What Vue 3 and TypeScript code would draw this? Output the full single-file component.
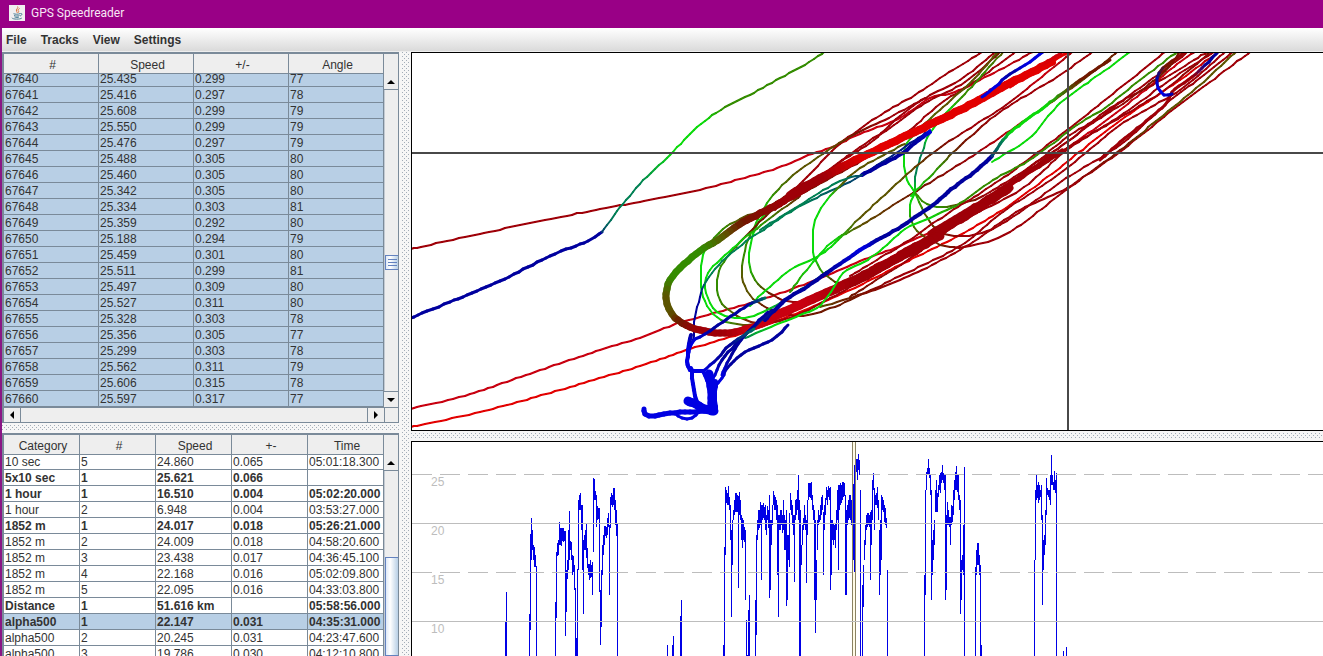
<script setup lang="ts">
import { onMounted, ref } from 'vue'

type Rgb = [number, number, number]
type Knot = [number, number, string?]
interface Track { w: number; pts: Knot[] }
interface Segment { d: string; color: string; w: number }
interface ResultRow { cells: string[]; best?: boolean; selected?: boolean }

const menus = ['File', 'Tracks', 'View', 'Settings']

const pointData: [string, string, string][] = [
  ['25.435', '0.299', '77'], ['25.416', '0.297', '78'], ['25.608', '0.299', '79'],
  ['25.550', '0.299', '79'], ['25.476', '0.297', '79'], ['25.488', '0.305', '80'],
  ['25.460', '0.305', '80'], ['25.342', '0.305', '80'], ['25.334', '0.303', '81'],
  ['25.359', '0.292', '80'], ['25.188', '0.294', '79'], ['25.459', '0.301', '80'],
  ['25.511', '0.299', '81'], ['25.497', '0.309', '80'], ['25.527', '0.311', '80'],
  ['25.328', '0.303', '78'], ['25.356', '0.305', '77'], ['25.299', '0.303', '78'],
  ['25.562', '0.311', '79'], ['25.606', '0.315', '78'], ['25.597', '0.317', '77'],
]
const points = pointData.map((p, i) => [String(67640 + i), ...p])

const results: ResultRow[] = [
  { cells: ['10 sec', '5', '24.860', '0.065', '05:01:18.300'] },
  { cells: ['5x10 sec', '1', '25.621', '0.066', ''], best: true },
  { cells: ['1 hour', '1', '16.510', '0.004', '05:02:20.000'], best: true },
  { cells: ['1 hour', '2', '6.948', '0.004', '03:53:27.000'] },
  { cells: ['1852 m', '1', '24.017', '0.018', '05:26:21.000'], best: true },
  { cells: ['1852 m', '2', '24.009', '0.018', '04:58:20.600'] },
  { cells: ['1852 m', '3', '23.438', '0.017', '04:36:45.100'] },
  { cells: ['1852 m', '4', '22.168', '0.016', '05:02:09.800'] },
  { cells: ['1852 m', '5', '22.095', '0.016', '04:33:03.800'] },
  { cells: ['Distance', '1', '51.616 km', '', '05:58:56.000'], best: true },
  { cells: ['alpha500', '1', '22.147', '0.031', '04:35:31.000'], best: true, selected: true },
  { cells: ['alpha500', '2', '20.245', '0.031', '04:23:47.600'] },
  { cells: ['alpha500', '3', '19.786', '0.030', '04:12:10.800'] },
]

/* Speed palette: slow is blue, medium green, fast red. */
const palette: Record<string, Rgb> = {
  R: [226, 0, 0], r: [200, 0, 16], d: [158, 0, 8], m: [112, 24, 0],
  o: [92, 84, 0], g: [52, 140, 0], G: [10, 218, 10], t: [0, 128, 84],
  b: [0, 0, 158], B: [0, 0, 226], k: [0, 60, 110],
}

const tracks: Track[] = [
  { w: 2, pts: [[411, 249, 'd'], [470, 236], [540, 221], [600, 209], [640, 202], [695, 191], [740, 179, 'r'], [777, 168], [812, 154], [835, 146], [860, 134], [900, 118], [930, 98], [955, 92], [990, 75], [1033, 52, 'd']] },
  { w: 3, pts: [[411, 318, 'b'], [450, 302], [500, 281], [550, 256], [588, 241, 'b'], [602, 232, 'b']] },
  { w: 2, pts: [[602, 232, 'k'], [615, 214, 't'], [640, 184, 't'], [673, 152, 'G'], [690, 134, 'G'], [705, 121, 'G'], [725, 107, 'g'], [750, 95, 'g'], [780, 78, 'g'], [805, 65, 'g'], [824, 52, 'g']] },
  { w: 2, pts: [[411, 409, 'r'], [470, 394], [535, 372], [600, 350], [640, 338], [673, 325], [700, 317], [760, 300], [813, 281], [860, 261], [900, 246], [950, 222], [1000, 192], [1067, 148], [1120, 110], [1180, 62], [1195, 52, 'd']] },
  { w: 2, pts: [[411, 427, 'R'], [480, 412], [560, 390], [640, 366], [690, 349], [740, 334], [800, 312], [850, 290], [900, 265], [960, 235], [1010, 205], [1067, 162], [1110, 128], [1180, 80], [1218, 52, 'd']] },
  { w: 2, pts: [[982, 52, 'd'], [945, 75], [915, 95], [885, 112], [860, 129], [835, 148], [800, 184], [772, 205, 'm'], [740, 219, 'o'], [723, 229, 'g'], [708, 245, 'g']] },
  { w: 2, pts: [[995, 52, 'd'], [960, 80], [930, 95], [900, 116], [870, 143], [838, 163], [810, 185], [775, 210, 'd']] },
  { w: 2, pts: [[1000, 52, 'm'], [965, 82, 'd'], [925, 103], [890, 128], [860, 147], [820, 178, 'd']] },
  { w: 2, pts: [[1015, 52, 'd'], [980, 78], [940, 104], [910, 130], [880, 150], [850, 160, 'd']] },
  { w: 2, pts: [[1003, 52, 'o'], [985, 72, 'g'], [962, 97, 'g'], [946, 113, 'G'], [930, 133, 'G'], [922, 153, 't'], [915, 177, 't'], [915, 193, 'G'], [910, 205, 'G'], [912, 222, 'g'], [922, 235, 'o'], [945, 246, 'm'], [970, 246, 'd'], [1010, 232, 'd'], [1070, 187], [1120, 152], [1160, 120], [1210, 82], [1250, 52, 'd']] },
  { w: 2, pts: [[998, 52, 'o'], [975, 78, 'o'], [940, 110, 'o'], [918, 130, 'g'], [905, 147, 'G'], [904, 162, 'G'], [907, 180, 'G'], [915, 193, 'G'], [927, 217, 'o'], [940, 232, 'm'], [965, 236, 'd'], [1000, 225, 'd'], [1070, 176], [1120, 145], [1165, 105], [1200, 78], [1233, 52, 'd']] },
  { w: 2, pts: [[925, 98, 'd'], [885, 120, 'd'], [855, 134, 'm'], [827, 151, 'o'], [797, 172, 'o'], [773, 195, 'g'], [760, 215, 'G'], [748, 240, 'g'], [743, 260, 'g'], [742, 277, 'o'], [750, 295, 'o'], [767, 308, 'm'], [790, 315, 'd'], [813, 314, 'm'], [850, 300, 'm'], [900, 276, 'd'], [960, 246], [1000, 214], [1067, 168], [1120, 125], [1180, 90], [1225, 52, 'd']] },
  { w: 2, pts: [[870, 156, 'd'], [800, 195, 'm'], [768, 212, 'G'], [755, 230, 'G'], [749, 257, 'G'], [755, 280, 'g'], [773, 295, 'm'], [793, 302, 'd'], [820, 298, 'd'], [870, 275, 'd'], [940, 235, 'd'], [1067, 142], [1110, 108], [1165, 78], [1207, 52, 'd']] },
  { w: 2, pts: [[840, 170, 'd'], [780, 205, 'm'], [750, 232, 'm'], [727, 257, 'g'], [717, 280, 'g'], [720, 300, 'g'], [737, 316, 'o'], [763, 323, 'd'], [800, 314, 'd'], [850, 287, 'd']] },
  { w: 2, pts: [[800, 196, 'm'], [765, 222, 'g'], [733, 248, 'G'], [708, 273, 'G'], [706, 293, 'G'], [717, 312, 'G'], [740, 318, 'G'], [763, 312, 'G'], [790, 297, 't'], [830, 270, 't'], [858, 252, 'k']] },
  { w: 2, pts: [[730, 230, 'o'], [705, 250, 'G'], [701, 277, 'G'], [703, 297, 'G'], [717, 317, 'G'], [743, 325, 'o'], [780, 320, 'd']] },
  { w: 2, pts: [[930, 130, 'b'], [860, 176, 'k'], [800, 206, 't'], [760, 232, 't'], [730, 254, 't'], [707, 280, 't'], [700, 297, 'b'], [695, 317, 'b'], [693, 340, 'b'], [688, 356, 'B'], [689, 368, 'B']] },
  { w: 2, pts: [[750, 306, 'G'], [763, 293, 'G'], [790, 270, 'G'], [817, 257, 'G'], [835, 243, 'G'], [860, 218, 'o'], [903, 178, 'o'], [937, 150, 'm'], [967, 130, 'd'], [1010, 102, 'd'], [1045, 74, 'r'], [1072, 52, 'd']] },
  { w: 2, pts: [[790, 292, 'g'], [813, 262, 'G'], [835, 240, 'G'], [860, 226, 'o'], [913, 193, 'm'], [977, 153, 'd'], [1030, 117, 'r'], [1080, 82, 'o'], [1117, 52, 'm']] },
  { w: 2, pts: [[905, 144, 'o'], [860, 168, 'o'], [843, 183, 'o'], [827, 200, 'G'], [815, 220, 'G'], [813, 240, 'G'], [814, 257, 'G'], [823, 273, 'g'], [840, 283, 'm'], [865, 280, 'd']] },
  { w: 2, pts: [[915, 193, 'g'], [927, 204, 'g'], [943, 207, 'g'], [970, 201, 'm'], [990, 192, 'd'], [1040, 160], [1070, 140], [1130, 95], [1175, 62], [1187, 52, 'd']] },
  { w: 2, pts: [[911, 196, 'G'], [940, 166, 'g'], [960, 146, 'm'], [1000, 112, 'd'], [1060, 75], [1092, 52, 'd']] },
  { w: 2, pts: [[992, 162, 'G'], [1027, 140, 'G'], [1045, 120, 'G'], [1060, 103, 'G'], [1080, 88, 'G'], [1100, 74, 'G'], [1130, 52, 'G']] },
  { w: 2, pts: [[1165, 52, 'd'], [1140, 72], [1105, 100], [1070, 128], [1000, 180], [950, 212], [900, 246], [850, 276, 'd']] },
  { w: 2, pts: [[1180, 52, 'm'], [1160, 76, 'm'], [1110, 112, 'd'], [1070, 135], [1020, 175], [940, 230], [870, 268, 'r']] },
  { w: 2, pts: [[1210, 52, 'm'], [1170, 86, 'd'], [1130, 112], [1070, 146], [1010, 184], [950, 225], [880, 272], [850, 287, 'd']] },
  { w: 2, pts: [[1214, 52, 'd'], [1170, 80], [1120, 116], [1067, 150], [1020, 190], [960, 222], [905, 262], [850, 297, 'm']] },
  { w: 2, pts: [[1236, 52, 'o'], [1200, 85, 'o'], [1160, 118, 'o'], [1120, 150, 'm'], [1067, 188, 'd'], [1020, 210], [960, 250], [900, 280], [850, 298, 'm'], [820, 307, 'o']] },
  { w: 3, pts: [[1218, 52, 'b'], [1205, 65, 'b'], [1192, 77, 'd'], [1172, 92, 'd'], [1165, 105, 'd'], [1125, 138, 'd'], [1100, 160, 'd']] },
  { w: 3, pts: [[1185, 52, 'd'], [1163, 68, 'm'], [1157, 78, 'b'], [1158, 88, 'B'], [1164, 95, 'B'], [1172, 94, 'b']] },
  { w: 5, pts: [[1062, 151, 'd'], [1010, 184], [970, 209], [930, 233, 'd']] },
  { w: 7, pts: [[1010, 188, 'd'], [970, 214], [930, 238], [900, 254, 'd']] },
  { w: 9, pts: [[940, 236, 'd'], [900, 257], [850, 282], [800, 305, 'r'], [765, 321, 'r']] },
  { w: 2, pts: [[745, 338, 't'], [775, 325, 'G'], [800, 315, 'G'], [817, 308, 'G'], [828, 296, 'G'], [843, 273, 'G'], [860, 264, 'G'], [880, 251, 'G'], [905, 229, 'G'], [930, 218, 'G'], [960, 203, 'g'], [993, 180, 'g'], [1033, 158, 'g'], [1077, 125, 'g'], [1105, 108, 'g'], [1140, 80, 'g'], [1177, 52, 'g']] },
  { w: 7, pts: [[830, 174, 'd'], [780, 203, 'd'], [740, 224, 'm'], [722, 237, 'o'], [700, 251, 'g'], [684, 264, 'g'], [670, 280, 'g'], [666, 298, 'o'], [672, 314, 'o'], [682, 323, 'm'], [700, 330, 'd'], [725, 333, 'd'], [750, 328, 'r'], [770, 321, 'r']] },
  { w: 8, pts: [[1052, 62, 'R'], [1010, 83], [960, 110], [910, 134], [860, 158, 'R'], [820, 178, 'd'], [790, 195, 'd']] },
  { w: 3, pts: [[1068, 52, 'R'], [1040, 68, 'R'], [1010, 87, 'R']] },
  { w: 3, pts: [[1062, 52, 'r'], [1030, 72, 'R'], [990, 90, 'R']] },
  { w: 3, pts: [[1043, 52, 'B'], [1025, 65, 'B'], [1010, 74, 'b'], [995, 87, 'B'], [982, 97, 'B']] },
  { w: 4, pts: [[930, 132, 'B'], [915, 143, 'b'], [903, 153, 'b'], [885, 163, 'b'], [862, 175, 'b']] },
  { w: 2, pts: [[862, 175, 'k'], [840, 181, 't'], [800, 205, 't'], [760, 230, 't']] },
  { w: 4, pts: [[992, 156, 'b'], [977, 170], [958, 184], [940, 199], [907, 223], [877, 240], [860, 250, 'B'], [827, 273, 'b'], [800, 291], [785, 300, 'b'], [765, 320, 'b']] },
  { w: 3, pts: [[992, 156, 'k'], [1003, 140, 't'], [1012, 131, 'G'], [1030, 117, 'G'], [1047, 105, 'G'], [1080, 80, 'm'], [1110, 60, 'm']] },
  { w: 3, pts: [[773, 310, 'b'], [750, 330, 'k'], [735, 345, 'b'], [722, 360, 'b'], [713, 378, 'B']] },
  { w: 3, pts: [[788, 325, 'b'], [772, 340, 'b'], [745, 352, 'b'], [728, 367, 'b'], [722, 378, 'B'], [714, 386, 'B']] },
  { w: 3, pts: [[768, 312, 'b'], [745, 335, 'b'], [730, 358, 'b'], [722, 375, 'B']] },
  { w: 3, pts: [[754, 329, 't'], [730, 345, 'b'], [718, 358, 'b'], [703, 371, 'B']] },
  { w: 3, pts: [[765, 298, 't'], [748, 305, 'b'], [735, 314, 'b'], [710, 331, 'b'], [692, 343, 'B'], [687, 365, 'B']] },
  { w: 4, pts: [[691, 335, 'b'], [688, 350, 'B'], [688, 366], [694, 371], [703, 371], [707, 380], [712, 390, 'B']] },
  { w: 4, pts: [[691, 368, 'B'], [693, 384], [695, 396], [698, 406, 'B']] },
  { w: 9, pts: [[709, 374, 'B'], [711, 386], [712, 398], [712, 411, 'B']] },
  { w: 6, pts: [[715, 382, 'B'], [714, 396], [715, 411, 'B']] },
  { w: 9, pts: [[688, 401, 'B'], [694, 403], [704, 409], [714, 411, 'B']] },
  { w: 5, pts: [[644, 409, 'B'], [645, 414], [655, 416], [670, 413], [690, 412], [712, 411, 'B']] },
  { w: 3, pts: [[676, 414, 'B'], [682, 418], [692, 418], [699, 411, 'B']] },
]

function expand(track: Track): Segment[] {
  const p = track.pts
  let last: Rgb = palette[p[0][2] ?? 'd']
  const colors = p.map(k => (last = k[2] ? palette[k[2]] : last))
  const out: Segment[] = []
  for (let i = 0; i < p.length - 1; i++) {
    const a = p[Math.max(0, i - 1)], b = p[i], c = p[i + 1], e = p[Math.min(p.length - 1, i + 2)]
    const at = (t: number, axis: 0 | 1) => {
      const v = [a[axis], b[axis], c[axis], e[axis]]
      return 0.5 * (2 * v[1] + (v[2] - v[0]) * t + (2 * v[0] - 5 * v[1] + 4 * v[2] - v[3]) * t * t
        + (3 * v[1] - v[0] - 3 * v[2] + v[3]) * t * t * t)
    }
    const steps = Math.max(2, Math.round(Math.hypot(c[0] - b[0], c[1] - b[1]) / 5))
    for (let s = 0; s < steps; s++) {
      const t0 = s / steps, t1 = (s + 1) / steps
      const rgb = colors[i].map((v, n) => Math.round(v + (colors[i + 1][n] - v) * (t0 + t1) / 2))
      out.push({
        d: `M${Math.round(at(t0, 0))} ${Math.round(at(t0, 1))}L${Math.round(at(t1, 0))} ${Math.round(at(t1, 1))}`,
        color: `rgb(${rgb.join(',')})`,
        w: track.w,
      })
    }
  }
  return out
}
const segments = tracks.flatMap(expand)

/* Runs of consecutive samples: first column, then high,low per column. */
const runs: [number, string][] = [
  [506, '592,656'], [505, '622,656'],
  [529, '614,656 534,630 518,560 530,550 545,560 547,567 555,567 566,656'],
  [555, '602,656 552,618 543,556 540,555 522,545 528,545 528,546 528,541 528,542 531,541 531,636 570,612 560,579 530,570 511,560 541,550 542,560 555,575 556,572 565,590 588,656 638,656 569,656 500,570 495,510 493,510 505,530 505,570 540,614 535,550 530,550 524,558 548,568 564,575 564,580 560,578 565,577 562,595 478,552 479,500 491,500 495,527 506,520 508,519 508,592 590,645 570,627 545,575 535,555 526,545 526,536 527,538 518,535 513,527 525,595 497,528 493,505 495,507 488,505 488,510 500,525 510,536 523,656'],
  [667, '645,656'], [672, '645,656 636,656'], [680, '616,656 600,656'],
  [723, '645,656 547,656 487,555 490,503 493,505 486,505 497,510 505,540 530,617 520,565 510,520 500,515 493,512 493,512 495,512 496,588 492,515 500,520 515,540 518,548 520,540 527,542 530,600 620,656'],
  [747, '655,656 610,656 595,656'],
  [755, '600,656 535,635 520,540 510,530 510,528 502,525 505,580 505,520 503,518 507,520 505,530 515,535 506,520 510,528 495,598 520,590 520,545 505,525 491,505 495,510 497,510 500,520 505,575 515,617 515,530 510,530 510,525 515,533 500,530 515,550 520,550 510,606 535,600 535,560 513,567 493,510 500,515 505,525 515,535 515,582 500,520 499,515 490,510 475,520 500,656 510,656 545,565 525,545 518,530 505,525 515,530 520,583 500,535 483,500 483,497 483,498 482,500 495,510 505,520 510,600 520,633 560,600 520,550 510,525 515,522 505,520 497,515 495,510 512,575 505,530 498,515 487,500 490,505 486,497 488,500 487,590 520,575 520,540 523,545 525,540 523,548 510,530 490,520 485,570 485,510 483,505 485,503 482,500 482,497 483,496 495,595 510,595 505,525 500,520 495,518 495,520 500,525 512,520 484,560 465,572 465,570 459,472 459,480 454,470 460,475 490,656'],
  [861, '656,656 585,656 565,607 540,560 525,545 515,530 513,527 513,525 515,527 512,580 510,545 480,520 473,490 488,530 495,505 493,505 487,508 500,520 530,595 520,575 495,560 497,510 500,512 505,522 508,525 518,528 570,656'],
  [924, '575,656 490,595 472,490 468,475 459,475 468,478 475,495 490,600 540,575 530,560 520,545 490,512 480,512 493,512 485,497 475,490 473,493 472,483 465,480 473,483 474,490 475,600 515,590 502,525 510,525 517,527 517,545 505,525 506,522 490,515 480,500 472,490 466,490 475,492 475,500 495,510 500,614 560,600 555,570 525,575 467,656'],
  [975, '567,656 550,575 543,565 543,565 555,575 565,656 645,656'],
  [1034, '560,656 490,560 475,500 485,498 482,503 485,500 490,497 485,520 515,605 540,570 535,555 510,545 478,515 488,495 490,497 490,500 475,505 455,485 475,485 482,490 471,490 480,493 473,656'],
  [1063, '651,656'], [1066, '647,656'],
]
const speedPath = runs
  .map(([x0, text]) => text.split(' ').map((pair, i) => {
    const [hi, lo] = pair.split(',')
    return `M${x0 + i + 0.5} ${hi}V${lo}`
  }).join(''))
  .join('')

const gridLines = [
  { y: 474, label: '25', dashed: true },
  { y: 523, label: '20', dashed: false },
  { y: 572, label: '15', dashed: true },
  { y: 621, label: '10', dashed: false },
]

const pointsView = ref<HTMLElement | null>(null)
const resultsView = ref<HTMLElement | null>(null)
onMounted(() => {
  if (pointsView.value) pointsView.value.scrollTop = 3
  if (resultsView.value) resultsView.value.scrollTop = 1
})
</script>

<template>
  <div class="window">
    <header class="titlebar">
      <svg class="logo" viewBox="0 0 16 16" aria-hidden="true">
        <rect width="16" height="16" fill="#f1eef0" />
        <path d="M8.6 1.5C10 3.2 6.2 4.300 7.600 6.300C8 7 8.400 7.300 8.200 8M10.600 3.500C8.600 4.500 8.800 5.200 9.500 6.200C9.900 6.900 9.500 7.400 9 7.800" fill="none" stroke="#d9743f" stroke-width="1" />
        <path d="M4.500 8.700C6 9.400 9.500 9.400 11 8.600M5 10.500C6.500 11.200 9 11.200 10.500 10.500M5.500 12C7 12.600 9 12.600 10 12M11.300 8.500C13.800 8 13.200 10.400 11 11M3 12.800C3.500 14.500 11.500 14.600 12.800 13" fill="none" stroke="#4b7c93" stroke-width="1" />
      </svg>
      <span>GPS Speedreader</span>
    </header>

    <nav class="menubar">
      <button v-for="m in menus" :key="m" type="button">{{ m }}</button>
    </nav>

    <main class="workspace">
      <div class="tables">
        <section class="pane">
          <div ref="pointsView" class="view">
            <table class="grid points">
              <thead>
                <tr><th>#</th><th>Speed</th><th>+/-</th><th>Angle</th></tr>
              </thead>
              <tbody>
                <tr v-for="row in points" :key="row[0]" class="selected">
                  <td v-for="(cell, i) in row" :key="i">{{ cell }}</td>
                </tr>
              </tbody>
            </table>
            <div class="tail"></div>
          </div>
          <div class="vbar">
            <div class="corner"></div>
            <button type="button" aria-label="Scroll up"><svg viewBox="0 0 8 4"><path d="M0 4L4 0L8 4Z" /></svg></button>
            <div class="track">
              <div class="before"></div>
              <div class="thumb small"><i></i><i></i><i></i></div>
              <div class="after"></div>
            </div>
            <button type="button" aria-label="Scroll down"><svg viewBox="0 0 8 4"><path d="M0 0L4 4L8 0Z" /></svg></button>
          </div>
          <div class="hbar">
            <button type="button" aria-label="Scroll left"><svg class="side" viewBox="0 0 4 8"><path d="M4 0L0 4L4 8Z" /></svg></button>
            <div class="htrack"></div>
            <button type="button" aria-label="Scroll right"><svg class="side" viewBox="0 0 4 8"><path d="M0 0L4 4L0 8Z" /></svg></button>
          </div>
          <div class="hcorner"></div>
        </section>

        <div class="divider" role="separator"></div>

        <section class="pane lower">
          <div ref="resultsView" class="view">
            <table class="grid results">
              <thead>
                <tr><th>Category</th><th>#</th><th>Speed</th><th>+-</th><th>Time</th></tr>
              </thead>
              <tbody>
                <tr v-for="(row, r) in results" :key="r" :class="{ best: row.best, selected: row.selected }">
                  <td v-for="(cell, i) in row.cells" :key="i">{{ cell }}</td>
                </tr>
              </tbody>
            </table>
          </div>
          <div class="vbar">
            <div class="corner"></div>
            <button type="button" aria-label="Scroll up"><svg viewBox="0 0 8 4"><path d="M0 4L4 0L8 4Z" /></svg></button>
            <div class="track">
              <div class="start"></div>
              <div class="thumb tall"></div>
            </div>
          </div>
        </section>
      </div>

      <div class="divider upright" role="separator" aria-orientation="vertical"></div>

      <div class="plots">
        <section class="plot">
          <svg viewBox="412 53 911 377" preserveAspectRatio="xMinYMin slice" role="img" aria-label="Track map">
            <g class="trails" fill="none" stroke-linecap="round">
              <path v-for="(s, i) in segments" :key="i" :d="s.d" :stroke="s.color" :stroke-width="s.w" />
            </g>
            <path d="M412 153H1323M1068 53V430" fill="none" stroke="#484848" stroke-width="2" shape-rendering="crispEdges" />
          </svg>
        </section>
        <div class="divider" role="separator"></div>
        <section class="plot">
          <svg viewBox="412 442 911 214" preserveAspectRatio="xMinYMin slice" role="img" aria-label="Speed chart">
            <g shape-rendering="crispEdges" fill="none">
              <rect x="853" y="442" width="2" height="214" fill="#fffbe6" />
              <path :d="speedPath" stroke="#0000e6" stroke-width="1" />
              <path d="M852.5 442V656M855.5 442V656" stroke="#8a8262" />
              <line
                v-for="g in gridLines" :key="g.y" x1="412" x2="1323" :y1="g.y + 0.5" :y2="g.y + 0.5"
                stroke="#bdbdbd" :stroke-dasharray="g.dashed ? '20 8' : undefined"
              />
            </g>
            <text v-for="g in gridLines" :key="g.label" x="431" :y="g.y + 12">{{ g.label }}</text>
          </svg>
        </section>
      </div>
    </main>
  </div>
</template>

<style>
body {
  margin: 0;
  overflow: hidden;
}
</style>

<style scoped>
.window {
  box-sizing: border-box;
  height: 100vh;
  display: grid;
  grid-template-rows: 28px 23px minmax(0, 1fr);
  background: #eee;
  border-left: 2px solid #8a1685;
  color: #333;
  font: 12px/14px "Liberation Sans", Arial, sans-serif;
}
button {
  border: 0;
  margin: 0;
  padding: 0;
  background: none;
  color: inherit;
  font: inherit;
}
.titlebar {
  display: flex;
  align-items: center;
  gap: 6px;
  margin-left: -2px;
  padding: 0 9px 2px;
  background: #990086;
  color: #f8e6f5;
  font-family: Roboto, "Open Sans", sans-serif;
}
.logo {
  width: 16px;
  height: 16px;
}
.menubar {
  display: flex;
  align-items: center;
  gap: 14px;
  padding: 0 4px;
  background: linear-gradient(#fff, #dadada);
}
.menubar button {
  font-weight: bold;
}
.workspace {
  display: grid;
  grid-template-columns: minmax(397px, 30%) 12px minmax(0, 1fr);
  min-height: 0;
  padding-top: 1px;
  background: #eee;
}
.tables {
  display: grid;
  grid-template-rows: minmax(0, 371fr) 10px minmax(0, 223fr);
  min-height: 0;
}
.plots {
  display: grid;
  grid-template-rows: minmax(0, 379fr) 10px minmax(0, 215fr);
  min-height: 0;
}
.divider {
  background-color: #f6f6f6;
  background-image:
    linear-gradient(#a3adb8, #a3adb8),
    linear-gradient(#a3adb8, #a3adb8);
  background-size: 4px 4px;
  background-repeat: space;
  border: solid #f6f6f6;
  border-width: 2px 0;
  background-clip: padding-box;
  background-image:
    conic-gradient(from 270deg at 1px 1px, #a3adb8 90deg, transparent 0),
    conic-gradient(from 270deg at 1px 1px, #a3adb8 90deg, transparent 0);
  background-position: 0 0, 2px 2px;
  background-repeat: repeat;
}
.divider.upright {
  border-width: 0 2px 0 3px;
}
.pane {
  display: grid;
  grid-template-columns: minmax(0, 1fr) 14px;
  grid-template-rows: minmax(0, 1fr) 15px;
  border: 2px solid #7a8a99;
  border-width: 2px 1px 1px 2px;
  min-height: 0;
}
.pane.lower {
  grid-template-rows: minmax(0, 1fr);
  border-bottom: 0;
}
.view {
  overflow: hidden;
  min-height: 0;
  background: #fff;
}
.tail {
  height: 6px;
}
.grid {
  width: 100%;
  table-layout: fixed;
  border-collapse: separate;
  border-spacing: 0;
}
th,
td {
  box-sizing: border-box;
  border: solid #7a8a99;
  border-width: 0 1px 1px 0;
  white-space: nowrap;
}
th {
  position: sticky;
  top: 0;
  height: 20px;
  padding: 3px 0 0 3px;
  background: #eee;
  font-weight: normal;
}
td {
  height: 16px;
  padding: 1px 0 0 1px;
}
.best {
  font-weight: bold;
}
.selected {
  background: #b8cfe5;
}
.vbar {
  display: flex;
  flex-direction: column;
  min-height: 0;
  background: #eee;
}
.corner {
  flex: 0 0 20px;
}
.vbar button {
  flex: 0 0 16px;
  display: grid;
  place-items: center;
  border-bottom: 1px solid #7a8a99;
}
.vbar button + .track + button {
  border-top: 1px solid #7a8a99;
  border-bottom: 0;
}
.vbar svg {
  width: 8px;
  height: 4px;
}
.vbar .track {
  border-left: 1px solid #c3cad2;
}
svg.side {
  width: 4px;
  height: 8px;
}
.track {
  flex: 1;
  display: flex;
  flex-direction: column;
  min-height: 0;
}
.before {
  flex: 166;
}
.after {
  flex: 121;
}
.start {
  flex: 0 0 86px;
}
.thumb {
  border: solid #6382bf;
  border-width: 1px 0 1px 1px;
  background: linear-gradient(90deg, #dfe9f7, #fff 35%, #b8cfe5);
}
.small {
  display: flex;
  flex: 0 0 13px;
  flex-direction: column;
  align-items: center;
  justify-content: center;
  gap: 2px;
}
.small i {
  width: 9px;
  height: 1px;
  background: #6382bf;
}
.tall {
  flex: 1;
}
.hbar {
  display: flex;
  border-top: 1px solid #7a8a99;
  background: #eee;
}
.hbar button {
  flex: 0 0 16px;
  display: grid;
  place-items: center;
}
.htrack {
  flex: 1;
  border: solid #7a8a99;
  border-width: 0 1px;
}
.hcorner {
  border: solid #7a8a99;
  border-width: 1px 0 0 1px;
}
.plot {
  min-height: 0;
  overflow: hidden;
  border: solid #000;
  border-width: 1px 0 1px 1px;
  background: #fff;
}
.plot:last-child {
  border-bottom: 0;
}
.plot svg {
  display: block;
  width: 100%;
  height: 100%;
}
.plot text {
  fill: #bdbdbd;
}
</style>
